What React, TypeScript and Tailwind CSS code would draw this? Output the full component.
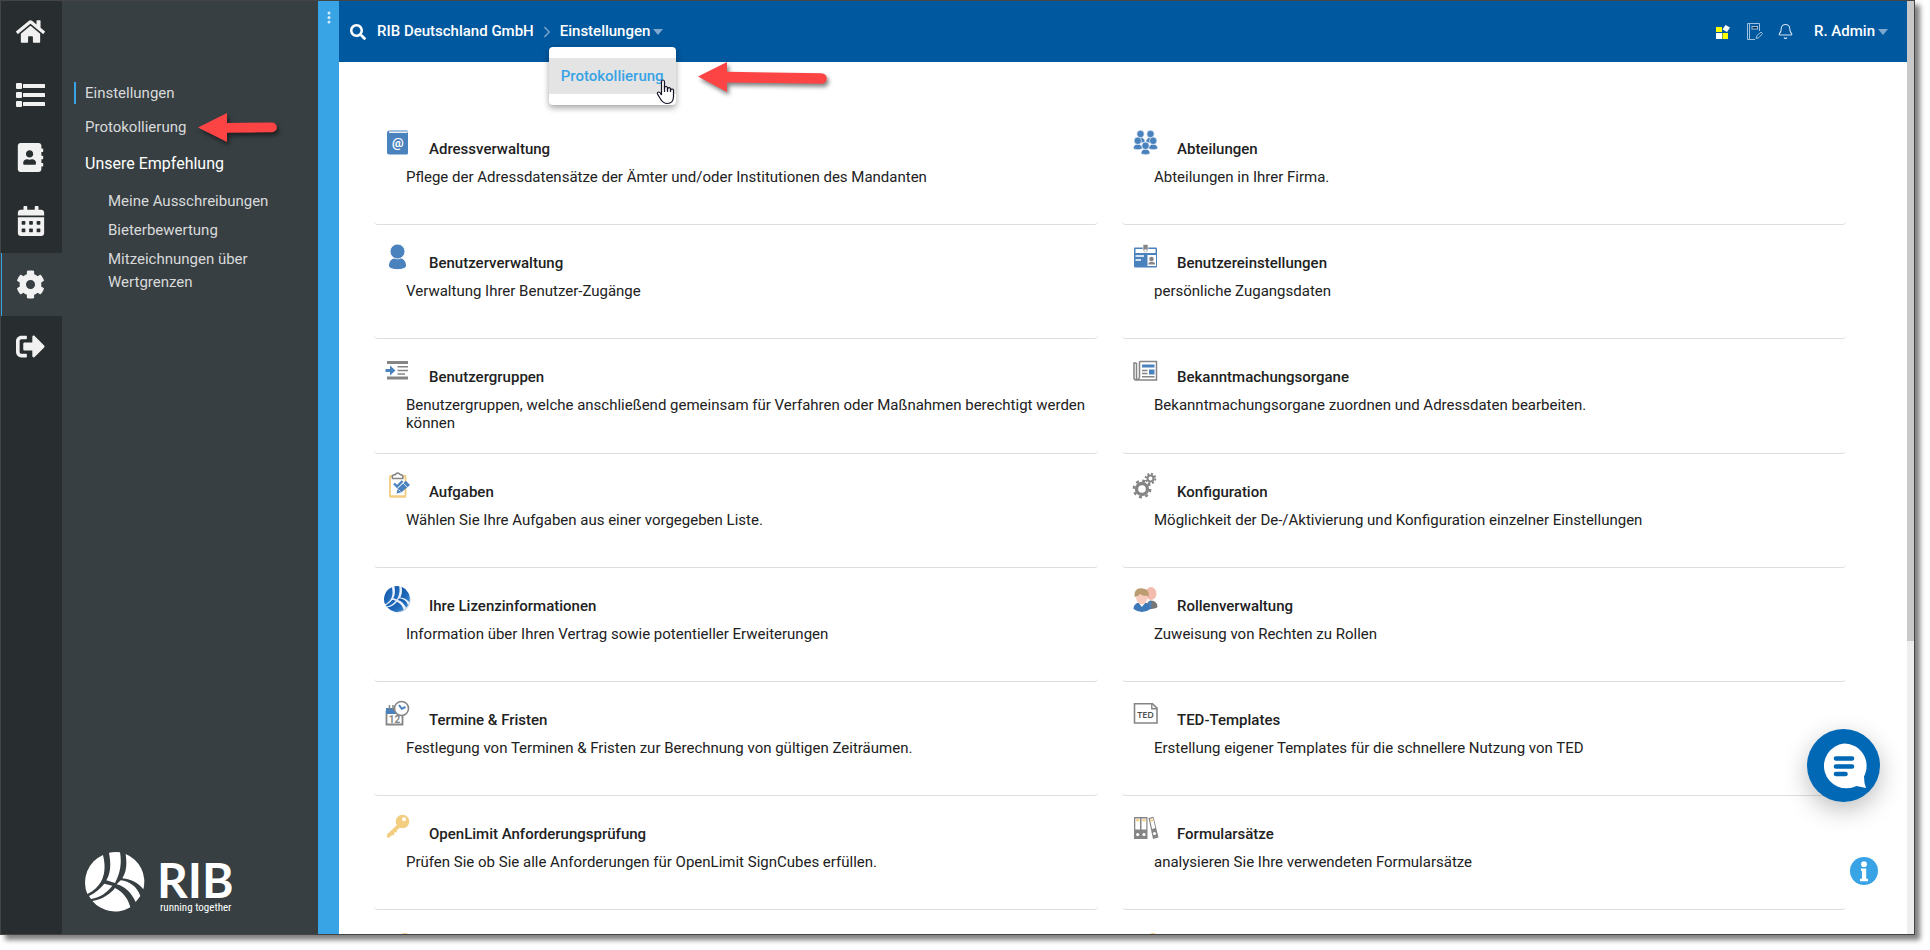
import React from "react";
import {
  FaHome,
  FaAddressBook,
  FaCalendarAlt,
  FaCog,
  FaSignOutAlt,
  FaSearch,
} from "react-icons/fa";
import { Bell, ChevronRight } from "lucide-react";

const BLUE = "#4a82bd";
const GREY = "#858585";
const SAND = "#f3cd80";

function ListIcon() {
  return (
    <svg width="30" height="26" viewBox="0 0 30 26" fill="currentColor" aria-hidden="true">
      {[1, 10, 19].map((y) => (
        <g key={y}>
          <rect x="0" y={y} width="6" height="6" rx="1" />
          <rect x="7" y={y + 1} width="22" height="4" rx="0.5" />
        </g>
      ))}
    </svg>
  );
}

function RibShapes() {
  return (
    <>
      <path d="M54 9 C64 50 62 98 7 126 A90 90 0 0 1 54 9Z" />
      <path d="M72 2 Q88 -1 105 1 C112 40 102 70 90 93 L64 85 C78 60 78 35 72 2Z" />
      <path d="M122 6 A90 90 0 0 1 175 112 C160 92 140 83 112 79 C127 55 125 30 122 6Z" />
      <path d="M12 132 C32 122 46 110 58 95 L82 101 C66 122 46 136 18 141Z" />
      <path d="M22 147 C52 142 74 128 90 108 C112 118 130 140 136 166 A90 90 0 0 1 22 147Z" />
      <path d="M95 97 L107 85 C134 88 156 104 166 132 L152 150 C138 122 122 104 95 97Z" />
    </>
  );
}

function CardIcon({ children }: { children: React.ReactNode }) {
  return (
    <svg width="28" height="28" viewBox="0 0 28 28" fill="none" aria-hidden="true" className="shrink-0">
      {children}
    </svg>
  );
}

const person = (x: number, y: number) => (
  <g key={`${x}-${y}`} fill={BLUE} stroke="#fff" strokeWidth="0.6">
    <path d={`M${x - 4.6} ${y + 8} Q${x - 4.4} ${y + 3.4} ${x} ${y + 3.4} T${x + 4.6} ${y + 8} Q${x} ${y + 10} ${x - 4.6} ${y + 8}Z`} />
    <circle cx={x} cy={y} r="3.7" />
  </g>
);

const icons: Record<string, React.ReactNode> = {
  address: (
    <>
      <path d="M6.5 2.5H24.5V4H25V25A1.5 1.5 0 0 1 23.5 26.5H6A2 2 0 0 1 4 24.5V5A2.5 2.5 0 0 1 6.5 2.5Z" fill={BLUE} />
      <path d="M6 4.2H24.5" stroke="#fff" strokeWidth="1.4" />
      <text x="14.8" y="19" fontSize="13" fontWeight="700" fill="#fff" textAnchor="middle" fontFamily="Roboto">
        @
      </text>
    </>
  ),
  user: (
    <g fill={BLUE}>
      <path d="M6 24C6 18.5 9 16 14.5 16S23 18.5 23 24C22 28.2 7 28.2 6 24Z" />
      <circle cx="14.5" cy="9.5" r="7.4" stroke="#fff" strokeWidth="0.8" />
    </g>
  ),
  groups: (
    <>
      <path d="M4 6.5H25M4 22H25" stroke={GREY} strokeWidth="3" />
      <path d="M14.5 10.8H25M14.5 14.5H25M14.5 18H22" stroke={GREY} strokeWidth="1.6" />
      <path d="M2.5 13H7V9.5L12.5 14.5L7 19.5V16H2.5Z" fill={BLUE} />
    </>
  ),
  tasks: (
    <>
      <rect x="7" y="5" width="15.5" height="20.5" rx="0.5" stroke={SAND} strokeWidth="1.8" fill="#fff" />
      <path d="M6.5 25.5H23" stroke={SAND} strokeWidth="2" />
      <path d="M9.5 7.5Q8.5 3.5 12 3.8Q14.5 0.5 17.5 3.8Q20.5 3.5 19.8 7.5Z" fill="#fff" stroke={GREY} strokeWidth="1.6" />
      <path d="M11 12.5L14 15.5L19.5 10" stroke={BLUE} strokeWidth="2.4" />
      <path d="M13.5 22.5L14.8 17.5L22.8 9.8L27 14L18.5 21.3Z" fill={BLUE} />
      <path d="M20 12L24.5 16.5M15.5 18.5L17.5 20.5" stroke="#fff" strokeWidth="0.8" />
    </>
  ),
  license: (
    <>
      <defs>
        <linearGradient id="ribBlue" x1="0" y1="0" x2="1" y2="1">
          <stop offset="0" stopColor="#1556a8" />
          <stop offset="0.6" stopColor="#1f69ba" />
          <stop offset="1" stopColor="#3d8fd6" />
        </linearGradient>
      </defs>
      <circle cx="15" cy="15" r="12.5" fill="#c9d3df" />
      <circle cx="14" cy="14" r="12.8" fill="#e9f1fa" />
      <g transform="translate(1 1) scale(0.145)" fill="url(#ribBlue)">
        <RibShapes />
      </g>
    </>
  ),
  dates: (
    <>
      <path d="M3.5 12V25.5H19.5V16" stroke={GREY} strokeWidth="1.8" />
      <path d="M3 9H11Q11.5 13 14 15H3Z" fill={BLUE} />
      <path d="M6.5 6V11M10 6V11" stroke={GREY} strokeWidth="1.5" />
      <text x="11.5" y="24" fontSize="10" fontWeight="700" fill={GREY} textAnchor="middle" fontFamily="Roboto">
        12
      </text>
      <circle cx="18.5" cy="9.5" r="7" fill="#fff" stroke={GREY} strokeWidth="1.6" />
      <path d="M16 6L18.8 9.8L22.5 8" stroke={BLUE} strokeWidth="2" />
    </>
  ),
  key: (
    <>
      <path d="M16 10L18.5 13L6.5 24.5H4V21.5Z" fill={SAND} />
      <path d="M9 20L11 22M12 17.5L13.5 19" stroke={SAND} strokeWidth="1.8" />
      <circle cx="19.5" cy="8.5" r="6.8" fill={SAND} />
      <circle cx="21" cy="6.2" r="2" fill="#fff" />
    </>
  ),
  departments: (
    <>
      {person(9.5, 6)}
      {person(19.5, 6)}
      {person(6.8, 12.8)}
      {person(22.2, 12.8)}
      {person(14.5, 17.8)}
    </>
  ),
  badge: (
    <>
      <rect x="3" y="5.5" width="23" height="20" rx="1" fill={BLUE} />
      <rect x="4.5" y="7" width="20" height="4" fill="#fff" />
      <path d="M4.500 14H13M4.500 18H10" stroke="#fff" strokeWidth="1.6" />
      <rect x="16.5" y="13" width="8.5" height="11" fill="#fff" />
      <circle cx="20.5" cy="17" r="2.3" fill={GREY} />
      <path d="M17.5 22.5H24V21Q20.5 18.500 17.5 21Z" fill={GREY} />
      <path d="M12 2.500H17V8Q14.500 13 12 8Z" fill={GREY} stroke="#fff" strokeWidth="0.6" />
      <circle cx="14.5" cy="8.5" r="1.3" fill="#fff" />
    </>
  ),
  news: (
    <>
      <path d="M8.5 5.5H25.5V24H5Q3 24 3 21.5V7H5.5M8.5 5.5V21Q8 24 5.5 23.5V7" stroke={GREY} strokeWidth="1.5" />
      <rect x="11" y="8.5" width="12.5" height="3" fill={BLUE} />
      <path d="M11 14.5H16.5M11 17.5H16.5M11 20.8H23.5" stroke={GREY} strokeWidth="1.4" />
      <rect x="18" y="13.5" width="5.5" height="5" fill={BLUE} />
    </>
  ),
  gears: (
    <g stroke={GREY}>
      <circle cx="11" cy="18" r="5.5" strokeWidth="3.4" />
      <circle cx="11" cy="18" r="8.2" strokeWidth="2.4" strokeDasharray="3 3.44" />
      <circle cx="19.5" cy="7.5" r="3" strokeWidth="2" />
      <circle cx="19.5" cy="7.5" r="4.8" strokeWidth="2" strokeDasharray="1.9 1.87" />
    </g>
  ),
  roles: (
    <>
      <ellipse cx="20" cy="8.5" rx="5.5" ry="6.5" fill="#f4bcae" />
      <path d="M15 24Q15 16 20 15.5Q26.5 16 26.5 22Q24 24.5 15 24Z" fill="#767676" />
      <path d="M17.5 16.5L19.5 15.5L20.5 17L20.3 23.5L18.5 24Z" fill={BLUE} />
      <path d="M2.5 24Q2.5 18.5 8 17.5H14Q19 18.5 19.5 24Q11 30 2.5 24Z" fill="#3d78b8" />
      <path d="M7.5 17.5L10.8 22L14.5 17.5Z" fill="#fff" />
      <ellipse cx="10.8" cy="13" rx="5.6" ry="6.5" fill="#f7cbbd" />
      <path d="M3.5 12Q2.5 3 10.5 3.2Q19 3.5 17.8 12L16 10.5Q12 11.5 9 9Q7 11.5 3.5 12Z" fill="#bb9b70" />
    </>
  ),
  ted: (
    <>
      <path d="M3.500 4.800H21.500L26 9.200V24H3.500Z" stroke={GREY} strokeWidth="1.6" />
      <path d="M20.800 5V9.800H26" stroke={GREY} strokeWidth="1.4" />
      <text x="14.5" y="18.5" fontSize="9" fontWeight="600" fill="#4c4c4c" textAnchor="middle" fontFamily="Open Sans">
        TED
      </text>
    </>
  ),
  folders: (
    <>
      <path d="M3 4H16.5V26H3Z" fill={GREY} />
      <path d="M4.3 5.5H9V16.5H4.3ZM10.5 5.5H15.3V16.5H10.5Z" fill="#fff" />
      <path d="M17.5 5L22.5 3.7L27.5 24.5L22 26Z" fill={GREY} />
      <path d="M18.9 6L22 5.1L24.3 15L21.1 16Z" fill="#fff" />
      <path d="M5 7.3H8.4M11.3 7.3H14.7M19.5 7.8L22 7.2" stroke={SAND} strokeWidth="2" />
      <circle cx="6.7" cy="21.5" r="1.6" fill="#fff" />
      <circle cx="13" cy="21.5" r="1.6" fill="#fff" />
      <circle cx="23.5" cy="20.5" r="1.6" fill="#fff" />
    </>
  ),
  coin: <circle cx="22" cy="11.5" r="5.5" fill={SAND} />,
};

type Item = { icon: string; title?: string; text?: string };

const items: Item[] = [
  { icon: "address", title: "Adressverwaltung", text: "Pflege der Adressdatensätze der Ämter und/oder Institutionen des Mandanten" },
  { icon: "departments", title: "Abteilungen", text: "Abteilungen in Ihrer Firma." },
  { icon: "user", title: "Benutzerverwaltung", text: "Verwaltung Ihrer Benutzer-Zugänge" },
  { icon: "badge", title: "Benutzereinstellungen", text: "persönliche Zugangsdaten" },
  { icon: "groups", title: "Benutzergruppen", text: "Benutzergruppen, welche anschließend gemeinsam für Verfahren oder Maßnahmen berechtigt werden können" },
  { icon: "news", title: "Bekanntmachungsorgane", text: "Bekanntmachungsorgane zuordnen und Adressdaten bearbeiten." },
  { icon: "tasks", title: "Aufgaben", text: "Wählen Sie Ihre Aufgaben aus einer vorgegeben Liste." },
  { icon: "gears", title: "Konfiguration", text: "Möglichkeit der De-/Aktivierung und Konfiguration einzelner Einstellungen" },
  { icon: "license", title: "Ihre Lizenzinformationen", text: "Information über Ihren Vertrag sowie potentieller Erweiterungen" },
  { icon: "roles", title: "Rollenverwaltung", text: "Zuweisung von Rechten zu Rollen" },
  { icon: "dates", title: "Termine & Fristen", text: "Festlegung von Terminen & Fristen zur Berechnung von gültigen Zeiträumen." },
  { icon: "ted", title: "TED-Templates", text: "Erstellung eigener Templates für die schnellere Nutzung von TED" },
  { icon: "key", title: "OpenLimit Anforderungsprüfung", text: "Prüfen Sie ob Sie alle Anforderungen für OpenLimit SignCubes erfüllen." },
  { icon: "folders", title: "Formularsätze", text: "analysieren Sie Ihre verwendeten Formularsätze" },
  { icon: "coin" },
  { icon: "coin" },
];

const railItems = [
  { label: "Startseite", icon: <FaHome size={29} /> },
  { label: "Liste", icon: <ListIcon /> },
  { label: "Adressbuch", icon: <FaAddressBook size={29} /> },
  { label: "Kalender", icon: <FaCalendarAlt size={30} /> },
  { label: "Einstellungen", icon: <FaCog size={29} />, active: true },
  { label: "Abmelden", icon: <FaSignOutAlt size={29} /> },
];

function Card({ item }: { item: Item }) {
  return (
    <article className="min-h-[114px] rounded border-b border-[#dedede] pt-[17px] pb-[21px] text-[#212121]">
      <div className="flex items-start pl-[9px]">
        <CardIcon>{icons[item.icon]}</CardIcon>
        {item.title && (
          <h2 className="mt-[11px] ml-[18px] leading-5 font-medium">
            <a href="#">{item.title}</a>
          </h2>
        )}
      </div>
      {item.text && <p className="mt-[9px] pr-2 pl-8 leading-[18px]">{item.text}</p>}
    </article>
  );
}

function Caret() {
  return (
    <svg width="10" height="6" viewBox="0 0 10 6" fill="#7ea9cf" aria-hidden="true">
      <path d="M0 0H10L5 6Z" />
    </svg>
  );
}

function Breadcrumb() {
  return (
    <nav className="flex items-center" aria-label="Brotkrumen">
      <a href="#">RIB Deutschland GmbH</a>
      <ChevronRight size={18} strokeWidth={1.8} className="mx-1 text-[#7ea9cf]" />
      <div className="relative">
        <button type="button" className="flex items-center gap-[3px]">
          Einstellungen
          <Caret />
        </button>
        <div className="absolute top-[27px] -left-[11px] z-10 w-[127px] rounded-sm bg-white py-[11px] shadow-[0_3px_6px_rgba(0,0,0,0.35)]">
          <a href="#" className="block bg-[#e4e4e4] pl-3 leading-9 text-[#38a3e5]">
            Protokollierung
          </a>
          <svg width="19" height="26" viewBox="0 0 19 26" className="absolute top-8 left-[107px]" aria-hidden="true">
            <path
              d="M5.5 16V3Q5.5 1 7 1T8.5 3V10V8.5Q10 6.5 11.5 8.5V10Q13 7.5 14.5 9.5V11Q16.5 9 17.5 11V18Q17 24.5 11.5 24.5Q7 24.5 4.5 20L1.5 15Q1 13 3 13Q4 13 5.5 16Z"
              fill="#fff"
              stroke="#151528"
              strokeWidth="1.2"
            />
            <path d="M8.5 7V13M11.5 8.5V13M14.5 9.5V13" stroke="#151528" strokeWidth="1.2" />
          </svg>
          <svg width="138" height="40" viewBox="0 0 138 40" className="absolute top-[10px] left-[145px] drop-shadow-[2px_3px_2px_rgba(0,0,0,0.5)]" aria-hidden="true">
            <path d="M4 19.500L33 5V14.800L127.500 16.200A5.300 5.300 0 0 1 127.500 26.800L33 25.400V35Z" fill="#fc4444" />
          </svg>
        </div>
      </div>
    </nav>
  );
}

function Header() {
  return (
    <header className="flex h-[61px] items-center bg-[#00589f] pr-[19px] pl-[11px] font-medium text-white">
      <button type="button" aria-label="Suche" className="mr-[11px]">
        <FaSearch size={16} />
      </button>
      <Breadcrumb />
      <div className="ml-auto flex items-center">
        <button type="button" aria-label="Apps">
          <svg width="14" height="14" viewBox="0 0 14 14" aria-hidden="true">
            <path d="M0 2H6V7H0ZM6.5 8H12V14H6.5Z" fill="#ffff00" />
            <path d="M0 8H6V14H0ZM9.5 0L14 2.5L11 7L6.5 4.5Z" fill="#fff" />
          </svg>
        </button>
        <button type="button" aria-label="Notizen" className="ml-[17px]">
          <svg width="16" height="17" viewBox="0 0 16 17" fill="none" stroke="#9fc0dd" aria-hidden="true">
            <path d="M8 16.5H0.5V0.5H12.5V8M2.5 0.5V16.5" />
            <rect x="5" y="3.5" width="5.5" height="2.5" fill="#0b2440" />
            <path d="M9 15.5L10 12.5L14 9L15.5 10.5L12 14.5Z" />
          </svg>
        </button>
        <button type="button" aria-label="Benachrichtigungen" className="ml-[14px]">
          <Bell size={17} strokeWidth={1.5} className="text-[#d4e4f2]" />
        </button>
        <button type="button" className="ml-5 flex items-center gap-[3px]">
          R. Admin
          <Caret />
        </button>
      </div>
    </header>
  );
}

function Sidebar() {
  return (
    <aside className="flex w-64 shrink-0 flex-col bg-[#373f42] pt-[81px] text-[#d9dadb]">
      <a href="#" className="ml-3 border-l-2 border-[#38a3e5] pl-[9px] leading-[22px]">
        Einstellungen
      </a>
      <div className="relative mt-3 pl-[23px] leading-[22px]">
        <a href="#">Protokollierung</a>
        <svg width="86" height="38" viewBox="0 0 86 38" className="absolute top-[-7px] left-[133px] drop-shadow-[2px_3px_2px_rgba(0,0,0,0.5)]" aria-hidden="true">
          <path d="M3 18.5L32 4V14L77 13.5A4.9 4.9 0 0 1 77 23.3L32 23.8V33Z" fill="#fc4444" />
        </svg>
      </div>
      <h2 className="mt-[14px] pl-[23px] text-base leading-[24px] text-white">Unsere Empfehlung</h2>
      <ul className="mt-[14px] flex flex-col gap-[6px] pr-10 pl-[46px] leading-[23px]">
        <li><a href="#">Meine Ausschreibungen</a></li>
        <li><a href="#">Bieterbewertung</a></li>
        <li><a href="#">Mitzeichnungen über Wertgrenzen</a></li>
      </ul>
      <div className="mt-auto flex items-start pb-[20px] pl-[23px] text-white">
        <svg width="60" height="60" viewBox="0 0 180 180" fill="currentColor" aria-label="RIB">
          <RibShapes />
        </svg>
        <div className="mt-[6px] ml-3">
          <div className="font-[Lato,sans-serif] text-[48px] leading-[44px] font-bold">RIB</div>
          <div className="pl-[3px] font-['Liberation_Sans_Narrow','Roboto_Condensed',sans-serif] text-[11px] leading-3 whitespace-nowrap">
            running together
          </div>
        </div>
      </div>
    </aside>
  );
}

export default function App() {
  return (
    <div className="h-screen overflow-hidden bg-white pr-[15px] pb-[15px] font-[Roboto,sans-serif] text-[15px]">
      <div className="relative flex h-full border border-[#444] bg-white shadow-[5px_5px_5px_rgba(0,0,0,0.5)]">
        <nav className="flex w-[61px] shrink-0 flex-col bg-[#282d2f] text-[#f1f1f1]" aria-label="Hauptnavigation">
          {railItems.map((r) => (
            <button
              key={r.label}
              type="button"
              aria-label={r.label}
              className={
                r.active
                  ? "flex h-[63px] items-center justify-center border-l border-[#38a3e5] bg-[#373f42] pr-[3px]"
                  : "flex h-[63px] items-center justify-center pr-[2px] pb-[2px]"
              }
            >
              {r.icon}
            </button>
          ))}
        </nav>
        <Sidebar />
        <div className="flex w-[21px] shrink-0 justify-center bg-[#38a3e5] pt-[10px]">
          <svg width="4" height="14" viewBox="0 0 4 14" fill="#d6ebf9" aria-hidden="true">
            <circle cx="2" cy="2" r="1.5" />
            <circle cx="2" cy="6.5" r="1.5" />
            <circle cx="2" cy="11" r="1.5" />
          </svg>
        </div>
        <main className="flex min-w-0 flex-1 flex-col">
          <Header />
          <div className="min-h-0 flex-1 overflow-hidden pt-[49px] pr-[61px] pl-[35px]">
            <div className="grid grid-cols-2 gap-x-6">
              {items.map((item, i) => (
                <Card key={i} item={item} />
              ))}
            </div>
          </div>
        </main>
        <div className="w-[7px] shrink-0 bg-[#eee]">
          <div className="h-[68.6%] bg-[#c8c8c8]" />
        </div>

        {/* floating actions */}
        <button
          type="button"
          aria-label="Chat"
          className="absolute right-[34px] bottom-[132px] flex size-[73px] items-center justify-center rounded-full bg-[#0068b4] shadow-[0_8px_24px_rgba(0,0,0,0.25)]"
        >
          <svg width="46" height="46" viewBox="0 0 46 46" aria-hidden="true">
            <path d="M23 0.5A22.5 22.5 0 0 1 43 33.5Q43 40 45 45L35.5 43A22.5 22.5 0 1 1 23 0.5Z" fill="#fff" />
            <path d="M15 15.5H31M15 23.5H31M15 31H24.5" stroke="#0068b4" strokeWidth="4.6" strokeLinecap="round" />
          </svg>
        </button>
        <button type="button" aria-label="Information" className="absolute right-9 bottom-[49px] size-7 rounded-full bg-[#38a3e5]">
          <svg width="28" height="28" viewBox="0 0 28 28" fill="#fff" aria-hidden="true">
            <circle cx="14" cy="7.2" r="2.9" />
            <path d="M11 11.5H16.2V21.8H18V24.2H10V21.8H12V14H11Z" />
          </svg>
        </button>
      </div>
    </div>
  );
}
